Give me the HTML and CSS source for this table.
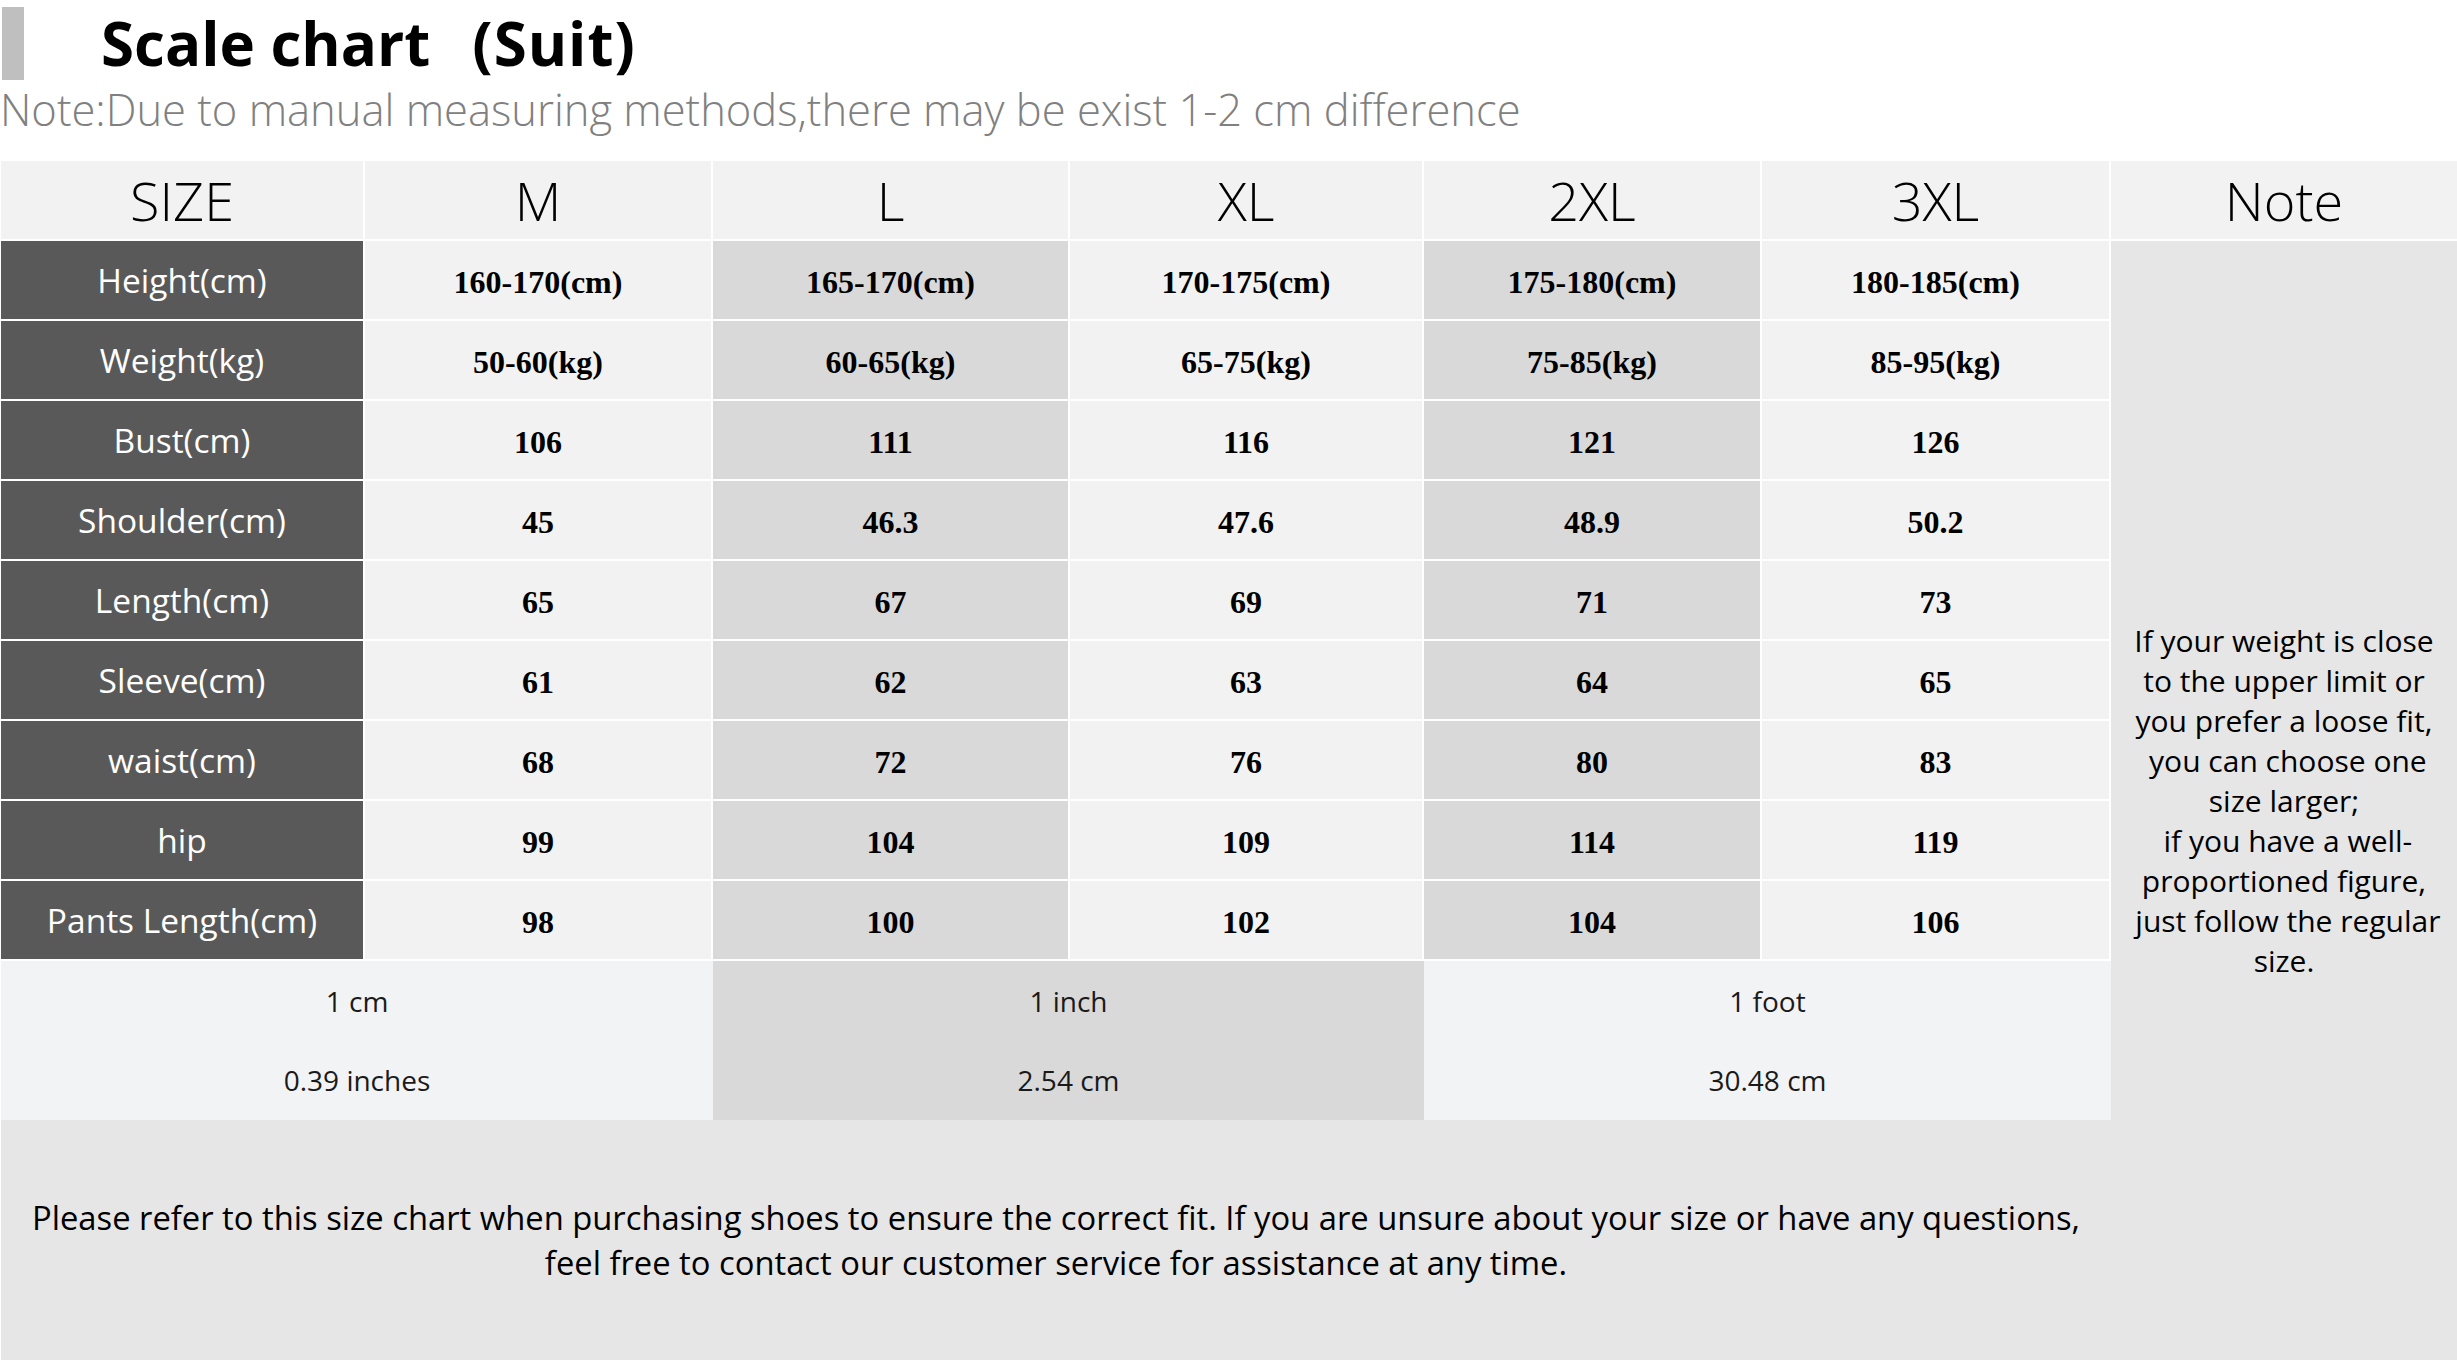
FILE: index.html
```html
<!DOCTYPE html>
<html lang="en">
<head>
<meta charset="utf-8">
<title>Scale chart (Suit)</title>
<link rel="stylesheet" href="styles.css">
</head>
<body>
<div class="page">
  <header class="head">
    <div class="title-row">
      <span class="bar"></span>
      <h1 class="title">Scale chart<span class="suit">(Suit)</span></h1>
    </div>
    <p class="subtitle">Note:Due to manual measuring methods,there may be exist 1-2 cm difference</p>
  </header>

  <div class="chart">
    <div class="hd">SIZE</div>
    <div class="hd">M</div>
    <div class="hd">L</div>
    <div class="hd">XL</div>
    <div class="hd">2XL</div>
    <div class="hd">3XL</div>
    <div class="hd">Note</div>

    <div class="note">If your weight is close<br>to the upper limit or<br>you prefer a loose fit,<br>&nbsp;you can choose one<br>size larger;<br>&nbsp;if you have a well-<br>proportioned figure,<br>&nbsp;just follow the regular<br>size.</div>

    <div class="lbl">Height(cm)</div>
    <div class="val lt">160-170(cm)</div>
    <div class="val dk">165-170(cm)</div>
    <div class="val lt">170-175(cm)</div>
    <div class="val dk">175-180(cm)</div>
    <div class="val lt">180-185(cm)</div>

    <div class="lbl">Weight(kg)</div>
    <div class="val lt">50-60(kg)</div>
    <div class="val dk">60-65(kg)</div>
    <div class="val lt">65-75(kg)</div>
    <div class="val dk">75-85(kg)</div>
    <div class="val lt">85-95(kg)</div>

    <div class="lbl">Bust(cm)</div>
    <div class="val lt">106</div>
    <div class="val dk">111</div>
    <div class="val lt">116</div>
    <div class="val dk">121</div>
    <div class="val lt">126</div>

    <div class="lbl">Shoulder(cm)</div>
    <div class="val lt">45</div>
    <div class="val dk">46.3</div>
    <div class="val lt">47.6</div>
    <div class="val dk">48.9</div>
    <div class="val lt">50.2</div>

    <div class="lbl">Length(cm)</div>
    <div class="val lt">65</div>
    <div class="val dk">67</div>
    <div class="val lt">69</div>
    <div class="val dk">71</div>
    <div class="val lt">73</div>

    <div class="lbl">Sleeve(cm)</div>
    <div class="val lt">61</div>
    <div class="val dk">62</div>
    <div class="val lt">63</div>
    <div class="val dk">64</div>
    <div class="val lt">65</div>

    <div class="lbl">waist(cm)</div>
    <div class="val lt">68</div>
    <div class="val dk">72</div>
    <div class="val lt">76</div>
    <div class="val dk">80</div>
    <div class="val lt">83</div>

    <div class="lbl">hip</div>
    <div class="val lt">99</div>
    <div class="val dk">104</div>
    <div class="val lt">109</div>
    <div class="val dk">114</div>
    <div class="val lt">119</div>

    <div class="lbl">Pants Length(cm)</div>
    <div class="val lt">98</div>
    <div class="val dk">100</div>
    <div class="val lt">102</div>
    <div class="val dk">104</div>
    <div class="val lt">106</div>

    <div class="conv conv-a"><span>1 cm</span><span>0.39 inches</span></div>
    <div class="conv conv-b"><span>1 inch</span><span>2.54 cm</span></div>
    <div class="conv conv-c"><span>1 foot</span><span>30.48 cm</span></div>

    <div class="foot">Please refer to this size chart when purchasing shoes to ensure the correct fit. If you are unsure about your size or have any questions,<br>feel free to contact our customer service for assistance at any time.</div>
  </div>
</div>
</body>
</html>
```

FILE: styles.css
```css
html, body {
  margin: 0;
  padding: 0;
  background: #ffffff;
}

.page {
  width: 2457px;
  height: 1362px;
  overflow: hidden;
  font-family: "Open Sans", "Noto Sans", "Liberation Sans", sans-serif;
  color: #000;
}

/* ---------- heading ---------- */
.head {
  height: 161px;
  box-sizing: border-box;
}

.title-row {
  display: flex;
  align-items: flex-start;
}

.bar {
  display: block;
  width: 22px;
  height: 73px;
  margin: 7px 0 0 2px;
  background: #bfbfbf;
}

.title {
  margin: 13px 0 0 77px;
  font-size: 60px;
  line-height: 1;
  font-weight: 700;
  white-space: nowrap;
}

.suit {
  margin-left: 42px;
  letter-spacing: 1px;
}

.subtitle {
  margin: 8px 0 0 0;
  font-size: 43.5px;
  line-height: 1;
  font-weight: 300;
  color: #808080;
  white-space: nowrap;
}

/* ---------- chart grid ---------- */
.chart {
  display: grid;
  margin-left: 1px;
  grid-template-columns: 362px 346px 355px 352px 336px 347px 346px;
  grid-template-rows: repeat(10, 78px) 159px 238px;
  gap: 2px;
  background: #ffffff;
}

.hd {
  display: flex;
  align-items: center;
  justify-content: center;
  background: #f2f2f2;
  font-size: 54px;
  font-weight: 300;
  color: #000;
}

.lbl {
  display: flex;
  align-items: center;
  justify-content: center;
  background: #595959;
  color: #ffffff;
  font-size: 33.5px;
}

.val {
  display: flex;
  align-items: center;
  justify-content: center;
  font-family: "Liberation Serif", "Times New Roman", serif;
  font-weight: 700;
  font-size: 32px;
  padding-top: 4px;
  box-sizing: border-box;
}

.lt { background: #f2f2f2; }
.dk { background: #d9d9d9; }

.note {
  grid-column: 7;
  grid-row: 2 / 13;
  display: flex;
  align-items: center;
  justify-content: center;
  background: #e6e6e6;
  text-align: center;
  font-size: 30px;
  line-height: 40px;
  white-space: nowrap;
}

.conv {
  grid-row: 11;
  display: flex;
  flex-direction: column;
  margin-right: -2px;
  font-size: 28px;
  color: #1a1a1a;
}

.conv span {
  flex: 1;
  display: flex;
  align-items: center;
  justify-content: center;
}

.conv-a { grid-column: 1 / 3; background: #f2f3f5; }
.conv-b { grid-column: 3 / 5; background: #d9d9d9; }
.conv-c { grid-column: 5 / 7; background: #f2f3f5; }

.foot {
  grid-column: 1 / 7;
  grid-row: 12;
  margin-top: -2px;
  margin-right: -2px;
  display: flex;
  align-items: center;
  justify-content: center;
  text-align: center;
  background: #e6e6e6;
  font-size: 32.75px;
  line-height: 45px;
  white-space: nowrap;
}
```
